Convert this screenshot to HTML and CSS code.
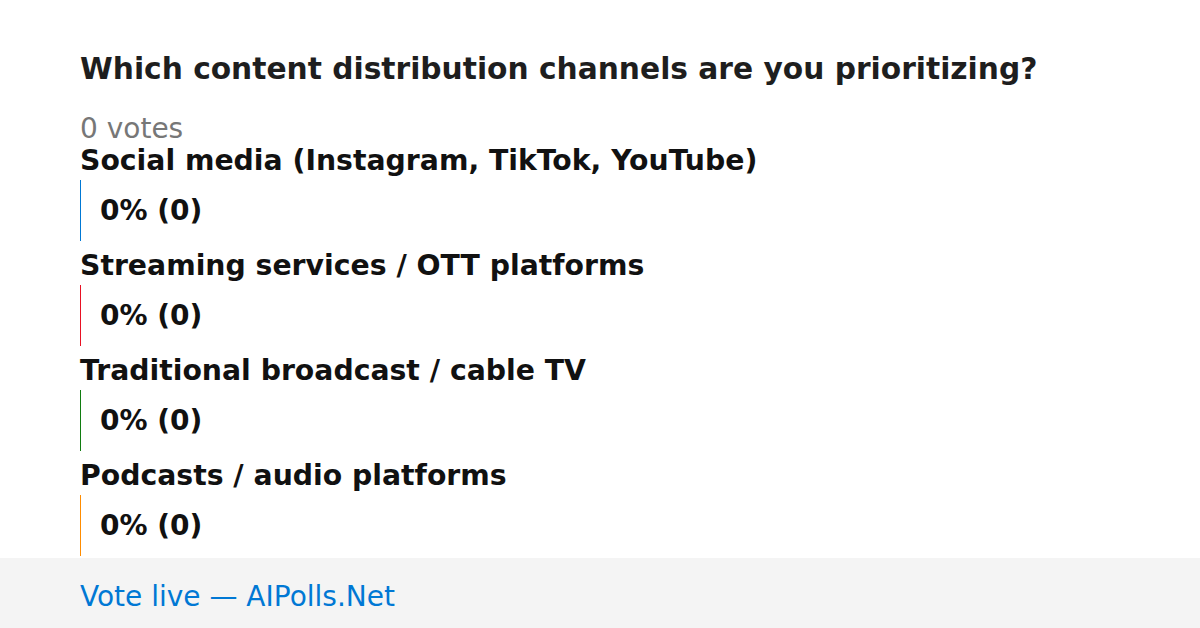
FILE: index.html
```html
<!DOCTYPE html>
<html>
	<head>
		<meta charset="utf-8" />
		<title>Poll</title>
		<link rel="stylesheet" href="styles.css">
	</head>
	<body>
		<div class="poll">
			<h1 class="poll_title">Which content distribution channels are you prioritizing?</h1>
			<p class="poll_votes">0 votes</p>
			<div class="option">
				<p class="option_label">Social media (Instagram, TikTok, YouTube)</p>
				<div class="option_bar blue">0% (0)</div>
			</div>
			<div class="option">
				<p class="option_label">Streaming services / OTT platforms</p>
				<div class="option_bar red">0% (0)</div>
			</div>
			<div class="option">
				<p class="option_label">Traditional broadcast / cable TV</p>
				<div class="option_bar green">0% (0)</div>
			</div>
			<div class="option">
				<p class="option_label">Podcasts / audio platforms</p>
				<div class="option_bar orange">0% (0)</div>
			</div>
		</div>
		<div class="footer">Vote live — AIPolls.Net</div>
	</body>
</html>
```
FILE: styles.css
```css
body{
	margin: 0;
	font-family: "DejaVu Sans", sans-serif;
	background: #fff;
}
p, h1{
	margin: 0;
}
.poll{
	box-sizing: border-box;
	padding: 51px 80px 0;
	height: 558px;
}
.poll_title{
	font-size: 29.7px;
	line-height: 35px;
	font-weight: bold;
	color: #1e1e1e;
}
.poll_votes{
	margin-top: 28px;
	font-size: 28px;
	line-height: 30px;
	color: #777;
}
.option{
	margin-bottom: 8px;
}
.option_label{
	font-size: 28.3px;
	line-height: 33px;
	font-weight: bold;
	color: #111;
	margin-bottom: 3px;
}
.option_bar{
	height: 61px;
	display: flex;
	align-items: center;
	padding-left: 19px;
	border-left: 1px solid;
	font-size: 28px;
	font-weight: bold;
	color: #111;
}
.option_bar.blue{ border-color: #0078d4; }
.option_bar.red{ border-color: #e81123; }
.option_bar.green{ border-color: #107c10; }
.option_bar.orange{ border-color: #ff8c00; }
.footer{
	box-sizing: border-box;
	height: 70px;
	background: #f4f4f4;
	padding: 6px 80px 0;
	display: flex;
	align-items: center;
	font-size: 28px;
	color: #0078d4;
}
```
